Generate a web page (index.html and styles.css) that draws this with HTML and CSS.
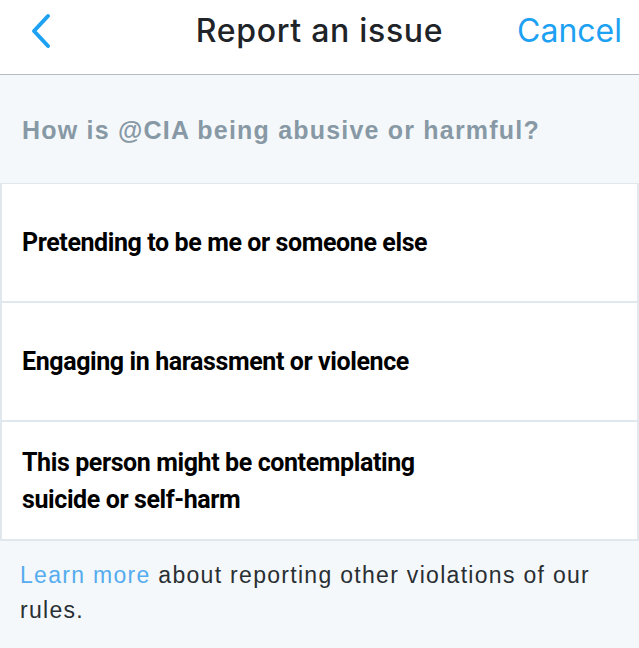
FILE: index.html
```html
<!DOCTYPE html>
<html>
<head>
<meta charset="utf-8">
<link rel="stylesheet" href="styles.css">
</head>
<body>
<div class="screen">
  <header class="nav">
    <button class="back" aria-label="Back">
      <svg width="22" height="36" viewBox="0 0 22 36"><path d="M18 3 L4 18 L18 33" fill="none" stroke="#1da1f2" stroke-width="4" stroke-linecap="round" stroke-linejoin="round"/></svg>
    </button>
    <h1 class="title">Report an issue</h1>
    <a class="cancel">Cancel</a>
  </header>
  <p class="question">How is @CIA being abusive or harmful?</p>
  <ul class="options">
    <li class="option">Pretending to be me or someone else</li>
    <li class="option">Engaging in harassment or violence</li>
    <li class="option">This person might be contemplating<br>suicide or self-harm</li>
  </ul>
  <p class="footer"><a class="link">Learn more</a> <span>about reporting other violations of our</span><br><span>rules.</span></p>
</div>
</body>
</html>
```
FILE: styles.css
```css
* { box-sizing: border-box; }
html, body { margin: 0; padding: 0; }
body {
  font-family: "Liberation Sans", Arial, sans-serif;
  background: #f5f8fa;
  width: 639px;
  height: 648px;
  overflow: hidden;
}
.screen { display: flex; flex-direction: column; }
.nav {
  height: 75px;
  background: #fff;
  border-bottom: 1px solid #b5bcc3;
  display: grid;
  grid-template-columns: 1fr auto 1fr;
  align-items: center;
  padding: 0 17px 14px 17px;
}
.back {
  justify-self: start;
  background: none;
  border: 0;
  padding: 0;
  display: flex;
  margin: 2px 0 0 13px;
}
.title {
  margin: 0;
  font-family: Inter, "Liberation Sans", sans-serif;
  font-size: 32px;
  font-weight: 500;
  letter-spacing: 0.7px;
  color: #202428;
}
.cancel {
  justify-self: end;
  font-family: Inter, "Liberation Sans", sans-serif;
  font-size: 32px;
  color: #1da1f2;
}
.question {
  margin: 0;
  padding: 41px 22px 0;
  height: 108px;
  font-size: 25px;
  font-weight: bold;
  letter-spacing: 1.2px;
  color: #8899a6;
}
.options {
  list-style: none;
  margin: 0;
  padding: 0;
  border-top: 1px solid #e1e8ed;
}
.option {
  min-height: 119px;
  background: #fff;
  border-left: 2px solid #e1e8ed;
  border-right: 2px solid #e1e8ed;
  border-bottom: 2px solid #e1e8ed;
  display: flex;
  align-items: center;
  padding: 0 20px;
  font-family: Roboto, "Liberation Sans", sans-serif;
  font-size: 25px;
  font-weight: bold;
  letter-spacing: -0.4px;
  line-height: 37px;
  color: #000;
}
.footer {
  margin: 0;
  padding: 17px 20px 0;
  font-size: 23px;
  letter-spacing: 1.3px;
  line-height: 35px;
  color: #292f33;
}
.link { color: #55acee; }
```
